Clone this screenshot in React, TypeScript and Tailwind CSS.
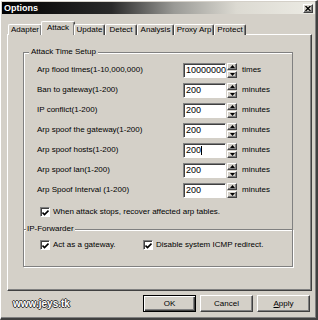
import type { ReactNode } from "react";

const raised =
  "border-t border-l border-t-white border-l-white border-r border-b border-r-[#404040] border-b-[#404040] shadow-[inset_-1px_-1px_0_#808080]";

const rows = [
  { label: "Arp flood times(1-10,000,000)", value: "10000000", unit: "times" },
  { label: "Ban to gateway(1-200)", value: "200", unit: "minutes" },
  { label: "IP conflict(1-200)", value: "200", unit: "minutes" },
  { label: "Arp spoof the gateway(1-200)", value: "200", unit: "minutes" },
  { label: "Arp spoof hosts(1-200)", value: "200", unit: "minutes", cursor: true },
  { label: "Arp spoof lan(1-200)", value: "200", unit: "minutes" },
  { label: "Arp Spoof Interval (1-200)", value: "200", unit: "minutes" },
];

const tabs = [
  { name: "Adapter", w: "w-[34px]" },
  { name: "Attack", w: "w-[34px]", active: true },
  { name: "Update", w: "w-[31px]" },
  { name: "Detect", w: "w-[32px]" },
  { name: "Analysis", w: "w-[37px]" },
  { name: "Proxy Arp", w: "w-[40px]" },
  { name: "Protect", w: "w-[32px]" },
];

const Arrow = ({ up }: { up?: boolean }) => (
  <svg width="5" height="3" viewBox="0 0 5 3">
    <path d={up ? "M0 3 L2.5 0 L5 3 Z" : "M0 0 L2.5 3 L5 0 Z"} fill="#000" />
  </svg>
);

const Spinner = () => (
  <div className="ml-[1px] flex h-[15px] w-[10px] flex-col">
    <div className={`flex h-[7px] items-center justify-center bg-[#d4d0c8] ${raised}`}>
      <Arrow up />
    </div>
    <div className={`mt-[1px] flex h-[7px] items-center justify-center bg-[#d4d0c8] ${raised}`}>
      <Arrow />
    </div>
  </div>
);

const CheckBox = ({ children, className }: { children: ReactNode; className?: string }) => (
  <div className={`flex items-center ${className ?? ""}`}>
    <div className="flex h-[10px] w-[10px] items-center justify-center border-t border-l border-t-[#808080] border-l-[#808080] border-r border-b border-r-white border-b-white bg-white shadow-[inset_1px_1px_0_#404040]">
      <svg width="7" height="7" viewBox="0 0 7 7">
        <path d="M0.5 3.5 L2.5 5.5 L6.5 1.5" stroke="#000" strokeWidth="1.6" fill="none" />
      </svg>
    </div>
    <span className="ml-[3px]">{children}</span>
  </div>
);

const App = () => {
  return (
    <div className="flex h-[320px] w-[318px] flex-col overflow-hidden border-t border-l border-t-white border-l-white border-r-2 border-b-2 border-r-[#404040] border-b-[#404040] bg-[#d4d0c8] font-['Liberation_Sans',Arial,sans-serif] text-[8px] leading-[10px] text-black shadow-[inset_-1px_-1px_0_#808080]">
      {/* title bar */}
      <div className="mx-[1px] mt-[1px] flex h-[12px] items-center justify-between bg-[linear-gradient(to_right,#000_0%,#2a2a2a_35%,#9a9a96_55%,#dcdad2_75%,#ecebe4_100%)] pl-[2px] pr-[2px]">
        <span className="text-[9px] font-bold text-white">Options</span>
        <div className={`flex h-[9px] w-[10px] items-center justify-center bg-[#d4d0c8] ${raised}`}>
          <svg width="6" height="5" viewBox="0 0 6 5">
            <path d="M0.5 0 L5.5 5 M5.5 0 L0.5 5" stroke="#000" strokeWidth="1.3" />
          </svg>
        </div>
      </div>

      {/* tabs */}
      <div className="relative z-10 ml-[7px] mt-[7px] flex h-[14px] items-end">
        {tabs.map((t) => (
          <div
            key={t.name}
            className={`flex items-center justify-center rounded-t-[2px] border-t border-l border-t-white border-l-white border-r border-r-[#404040] bg-[#d4d0c8] shadow-[inset_-1px_0_0_#808080] ${t.w} ${
              t.active ? "-mx-[1px] h-[14px] pb-[2px]" : "h-[11px]"
            }`}
          >
            {t.name}
          </div>
        ))}
      </div>

      {/* panel */}
      <div className="-mt-[1px] ml-[6px] h-[257px] w-[305px] border-t border-l border-t-white border-l-white border-r border-b border-r-[#404040] border-b-[#404040] pl-[15px] pt-[12px] shadow-[inset_-1px_-1px_0_#808080]">
        <fieldset className="w-[270px] border border-b-0 border-[#808080] pb-[9px] pt-[3px] shadow-[inset_1px_1px_0_#fff]">
          <legend className="ml-[5px] bg-[#d4d0c8] px-[2px]">Attack Time Setup</legend>
          {rows.map((r) => (
            <div key={r.label} className="flex h-[20px] items-center pl-[13px]">
              <span className="w-[146px]">{r.label}</span>
              <div className="flex h-[15px] w-[43px] items-center border-t border-l border-t-[#808080] border-l-[#808080] border-r border-b border-r-white border-b-white bg-white pl-[2px] text-[9px] shadow-[inset_1px_1px_0_#404040]">
                {r.value}
                {r.cursor && <span className="h-[9px] w-[1px] bg-black" />}
              </div>
              <Spinner />
              <span className="ml-[5px]">{r.unit}</span>
            </div>
          ))}
          <CheckBox className="mt-[4px] h-[16px] pl-[16px]">
            When attack stops, recover affected arp tables.
          </CheckBox>
        </fieldset>
        <fieldset className="-mt-[5px] w-[270px] border border-[#808080] pb-[13px] pt-[3px] shadow-[inset_1px_1px_0_#fff,1px_1px_0_#fff]">
          <legend className="ml-[2px] bg-[#d4d0c8] px-[1px]">IP-Forwarder</legend>
          <div className="flex h-[16px] items-center pl-[16px]">
            <CheckBox className="w-[103px]">Act as a gateway.</CheckBox>
            <CheckBox>Disable system ICMP redirect.</CheckBox>
          </div>
        </fieldset>
      </div>

      {/* bottom buttons */}
      <div className="mt-[4px] flex h-[17px] items-center pl-[12px] pr-[6px]">
        <span className="text-[10px] font-bold text-white [text-shadow:1px_0_0_#333,-1px_0_0_#333,0_1px_0_#333,0_-1px_0_#333]">
          www.jeys.tk
        </span>
        <div className="ml-auto flex gap-[4px]">
          <button className="h-[17px] w-[53px] border border-black bg-[#d4d0c8] shadow-[inset_1px_1px_0_#fff,inset_-1px_-1px_0_#404040,inset_-2px_-2px_0_#808080]">
            OK
          </button>
          <button className={`h-[17px] w-[53px] bg-[#d4d0c8] ${raised}`}>Cancel</button>
          <button className={`h-[17px] w-[53px] bg-[#d4d0c8] ${raised}`}>
            <span className="underline">A</span>pply
          </button>
        </div>
      </div>
    </div>
  );
};

export default App;
